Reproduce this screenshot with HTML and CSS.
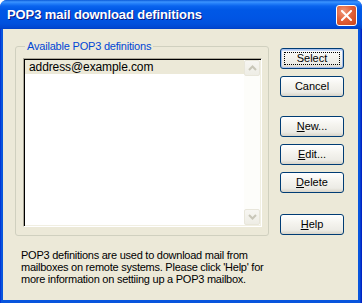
FILE: index.html
```html
<!DOCTYPE html>
<html>
<head>
<meta charset="utf-8">
<link rel="stylesheet" href="styles.css">
</head>
<body>
<div class="window">
  <div class="titlebar">
    <span class="title">POP3 mail download definitions</span>
    <button class="close" aria-label="Close">
      <svg width="11" height="11" viewBox="0 0 11 11"><path d="M1 1 L10 10 M10 1 L1 10" stroke="#fff" stroke-width="2" stroke-linecap="square" fill="none"/></svg>
    </button>
  </div>
  <div class="client">
    <div class="top">
      <fieldset class="group">
        <legend>Available POP3 definitions</legend>
        <div class="listbox">
          <div class="items">
            <div class="item selected">address@example.com</div>
          </div>
          <div class="scrollbar">
            <div class="sb-btn"><svg width="9" height="6" viewBox="0 0 9 6"><path d="M1 5 L4.5 1.5 L8 5" stroke="#c8c6b8" stroke-width="2" fill="none"/></svg></div>
            <div class="sb-track"></div>
            <div class="sb-btn"><svg width="9" height="6" viewBox="0 0 9 6"><path d="M1 1 L4.5 4.5 L8 1" stroke="#c8c6b8" stroke-width="2" fill="none"/></svg></div>
          </div>
        </div>
      </fieldset>
      <div class="buttons">
        <button class="btn default"><span class="focus">Select</span></button>
        <button class="btn">Cancel</button>
        <button class="btn gap"><u>N</u>ew...</button>
        <button class="btn"><u>E</u>dit...</button>
        <button class="btn"><u>D</u>elete</button>
        <button class="btn gap2"><u>H</u>elp</button>
      </div>
    </div>
    <p class="info">POP3 definitions are used to download mail from<br>mailboxes on remote systems. Please click 'Help' for<br>more information on settiing up a POP3 mailbox.</p>
  </div>
</div>
</body>
</html>
```
FILE: styles.css
```css
html, body {
  margin: 0;
  padding: 0;
  background: #ffffff;
}
.window {
  width: 362px;
  height: 303px;
  box-sizing: border-box;
  display: flex;
  flex-direction: column;
  border-radius: 7px 7px 0 0;
  overflow: hidden;
  background: linear-gradient(to right, #0019cf 0, #0855dd 1px, #0855dd 360px, #0024c4 361px);
  font-family: "Liberation Sans", Arial, sans-serif;
  font-size: 11px;
  color: #000;
}
.titlebar {
  height: 29px;
  flex: none;
  display: flex;
  justify-content: space-between;
  align-items: flex-start;
  padding: 0 5px 0 7px;
  box-sizing: border-box;
  background: linear-gradient(to bottom, #0a5ad8 0, #3d95ff 2px, #2a86fb 3px, #0a64ee 6px, #0058e6 10px, #0055e4 18px, #0050dc 24px, #0046d0 28px, #003dc0 29px);
}
.title {
  margin-top: 8px;
  font-family: "Liberation Sans", Arial, sans-serif;
  font-weight: bold;
  font-size: 13px;
  line-height: 14px;
  letter-spacing: -0.1px;
  color: #fff;
  text-shadow: 1px 1px 0 #0a1883;
}
.close {
  margin-top: 5px;
  width: 21px;
  height: 21px;
  padding: 0;
  border: 1px solid #fff;
  border-radius: 3px;
  background: radial-gradient(circle at 35% 30%, #f09a7c 0, #e2623b 45%, #cb4218 100%);
  display: flex;
  align-items: center;
  justify-content: center;
}
.close svg { display: block; }
.client {
  flex: 1;
  margin: 0 4px 3px 3px;
  background: #ece9d8;
  padding: 11px 0 0 12px;
}
.top {
  display: flex;
  align-items: flex-start;
}
.group {
  margin: 0;
  padding: 0 6px 8px 7px;
  width: 254px;
  box-sizing: border-box;
  border: 1px solid #d0d0bf;
  border-radius: 3px;
  min-width: 0;
}
.group legend {
  margin-left: 2px;
  padding: 0 2px;
  color: #0046d5;
  line-height: 13px;
  font-size: 11px;
  letter-spacing: -0.2px;
}
.listbox {
  margin-top: 5px;
  height: 169px;
  box-sizing: border-box;
  display: flex;
  border: 1px solid;
  border-color: #aca899 #ffffff #ffffff #aca899;
  box-shadow: inset 1px 1px 0 #000000, inset -1px -1px 0 #f1efe2;
  padding: 1px;
  background: #fff;
}
.items {
  flex: 1;
}
.item {
  height: 14px;
  line-height: 14px;
  padding-left: 4px;
  font-size: 12px;
  letter-spacing: -0.1px;
}
.item.selected {
  background: #ece9d8;
}
.scrollbar {
  width: 16px;
  display: flex;
  flex-direction: column;
  background: #fdfdfa;
}
.sb-btn {
  height: 16px;
  box-sizing: border-box;
  border: 1px solid #e8e6da;
  border-radius: 2px;
  background: linear-gradient(to bottom, #f7f6f2, #eeede5);
  display: flex;
  align-items: center;
  justify-content: center;
}
.sb-btn svg { display: block; }
.sb-track { flex: 1; }
.buttons {
  margin: 8px 0 0 11px;
  display: flex;
  flex-direction: column;
  gap: 7px;
}
.btn {
  width: 64px;
  height: 21px;
  padding: 0;
  box-sizing: border-box;
  border: 1px solid #003c74;
  border-radius: 3px;
  background: linear-gradient(to bottom, #ffffff 0, #f5f4ef 40%, #ecebe5 80%, #d8d4c8 100%);
  font-family: "Liberation Sans", Arial, sans-serif;
  font-size: 11px;
  color: #000;
  line-height: 13px;
}
.btn.gap { margin-top: 12px; }
.btn.gap2 { margin-top: 14px; }
.btn.default {
  box-shadow: inset 0 0 0 1px #a9c1ef, inset 0 1px 0 1px #cddcf7;
  padding: 3px;
}
.btn .focus {
  display: block;
  height: 100%;
  box-sizing: border-box;
  border: 1px dotted #000;
  line-height: 11px;
}
.info {
  margin: 13px 0 0 6px;
  line-height: 12px;
  font-size: 11px;
  letter-spacing: -0.25px;
}
```
